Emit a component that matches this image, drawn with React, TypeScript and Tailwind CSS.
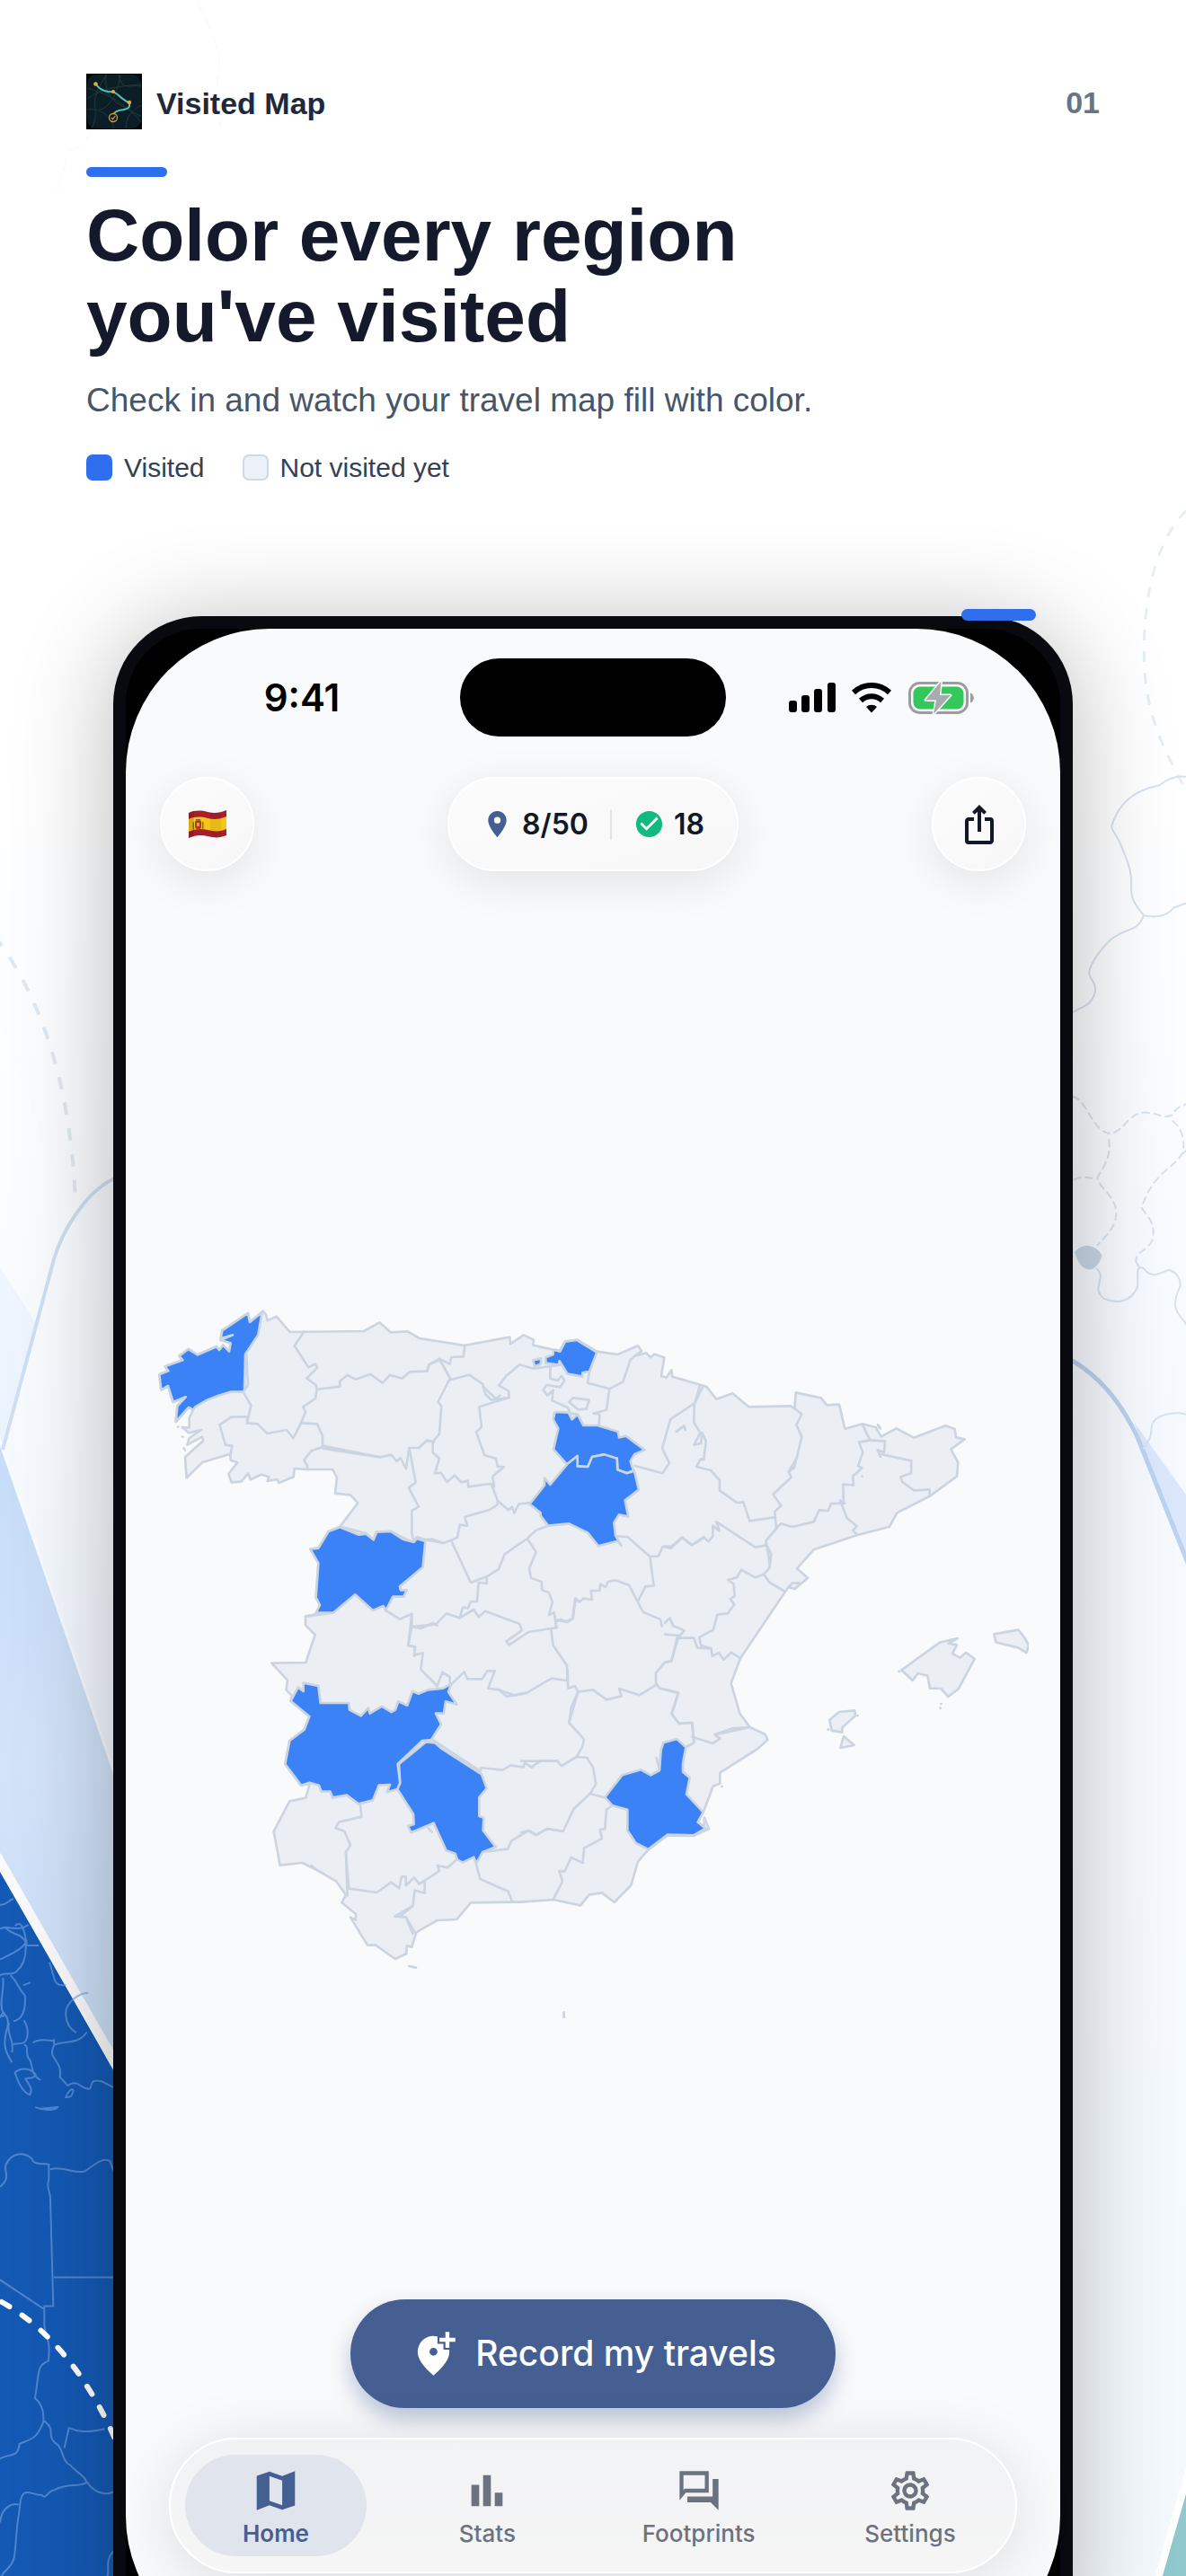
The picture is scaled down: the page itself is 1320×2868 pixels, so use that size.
import type { ReactNode } from 'react';
import { MdAddLocationAlt, MdCheckCircle, MdIosShare, MdLocationOn, MdOutlineSettings } from 'react-icons/md';

interface BorderGroup {
  x: number;
  y: number;
  lines: string[];
}

// Mainland silhouette, clockwise from A Coruña
const mainland =
  '398,58 408,70 413,90 443,76 488,128 735,125 787,96 824,129 882,126 920,149 1070,173 1222,145 1224,168 1268,138 1302,154 1300,172 1365,187 1390,190 1406,160 1447,154 1513,193 1582,203 1650,174 1662,192 1640,208 1678,198 1692,213 1705,202 1738,213 1728,275 1745,280 1762,255 1765,277 1878,310 1912,352 1966,333 2020,378 2160,375 2173,383 2177,330 2261,348 2281,372 2322,370 2341,451 2400,435 2445,447 2462,477 2513,450 2571,481 2677,441 2708,452 2712,480 2741,486 2695,520 2719,564 2715,610 2625,676 2515,732 2490,778 2381,807 2237,855 2181,918 2217,949 2174,986 2153,980 2142,995 1992,1218 1961,1301 1990,1402 2024,1448 2075,1472 2083,1490 2050,1520 1924,1600 1924,1636 1901,1645 1868,1732 1850,1765 1870,1780 1872,1750 1887,1788 1836,1811 1749,1809 1684,1858 1650,1897 1627,1976 1571,2033 1530,2001 1487,2008 1458,2043 1367,2024 1260,2032 1237,2032 1092,2034 1045,2090 980,2093 910,2133 895,2182 878,2178 877,2205 839,2222 774,2175 747,2176 690,2083 708,2092 708,2072 661,2034 675,2008 643,1963 578,1925 529,1901 455,1909 434,1796 487,1695 541,1684 554,1637 525,1642 472,1571 487,1493 536,1456 553,1412 491,1361 494,1342 476,1324 480,1291 427,1234 541,1232 572,1139 540,1107 540,1078 575,1070 588,1040 575,1015 583,900 556,853 583,850 617,794 655,778 715,699 690,673 639,667 645,615 631,587 546,587 503,584 500,612 451,632 445,620 413,626 418,612 393,604 356,621 349,600 326,627 293,630 283,602 313,564 290,556 289,535 196,563 143,615 138,546 198,492 195,478 145,505 152,482 192,455 150,465 128,446 152,448 152,415 165,388 150,380 107,428 112,375 140,345 98,362 81,308 58,322 52,270 82,258 71,243 130,222 118,208 149,185 180,204 243,177 252,188 265,172 285,193 290,165 257,155 297,138 257,150 262,123 348,65 354,95';

const borders: BorderGroup[] = [
  {
    x: 0,
    y: 0,
    lines: [
      '535,127 503,174 550,246 572,235 580,247 544,283 575,305 578,320',
      '578,320 655,310 655,292 680,272 707,286 757,269 797,298 822,272 863,283 888,261 947,259 953,237 990,220',
      '578,320 573,350 532,378 540,395 525,432 499,483 477,455 412,467 380,435 345,432 358,373 332,328',
      '343,205 348,305 332,328',
      '345,411 292,412 253,438 273,505 295,508 290,535',
      '345,432 345,411',
      '525,432 579,435 597,475 597,512 560,525 535,555 546,575 546,587',
      '597,508 790,546 826,538 845,560 857,548 876,585 886,515 918,515 945,490 965,495',
      '597,516 700,533 790,546',
      '886,515 908,630 885,648 918,712 895,725 895,800 902,828',
      '655,778 742,800 767,822 776,796 826,794 880,822 902,830 912,812 940,822 965,820 997,832',
      '808,1058 855,1087 893,1070 895,1110 883,1175 905,1180 903,1210',
    ],
  },
  {
    x: 870,
    y: 0,
    lines: [
      '202,173 198,210 157,212 152,235 117,218 82,237 75,259',
      '117,218 155,287',
      '130,240 155,287 217,271 262,302 270,335 290,355 350,347 348,325 316,307 340,275 385,237 432,250 520,238',
      '262,310 305,350 320,340',
      '350,347 250,378 258,445 240,463 268,540 305,550 312,578 333,578 295,610 300,645',
      '150,288 112,362 124,375 117,468 95,495 95,530 117,550 102,600 122,598 143,629 168,607 190,630 212,625 214,645 285,635 300,640',
      '100,495 75,490 48,515',
      '290,635 312,692 310,705 285,722 202,745 210,775 185,772 177,815 130,833 75,822',
      '312,692 348,723 360,712 367,733 382,703 420,698',
      '158,828 222,965 275,945 315,920 335,870 410,818 440,790 480,775',
      '275,950 275,968 248,965 243,1028 222,1028 213,1050 195,1048 185,1083',
      '25,1070 25,1112 105,1105 140,1068 185,1083 232,1055 248,1080 270,1060 385,1103 392,1125 340,1162 350,1173 415,1130 510,1115',
      '410,818 440,862 417,918 423,950 458,962 460,990 482,998 495,1030 483,1073 500,1065 508,1115',
      '510,1090 545,1097 563,1085 572,1018 585,1030 597,1018 627,1022 623,992 652,992 655,970 672,980 680,962 703,957 750,973 797,1063 855,1088 860,1110',
      '710,810 745,812 820,878 833,975 805,978 780,1027',
      '820,878 848,877 863,845 890,850 927,815 960,840 990,822',
      '770,575 862,600 885,565 861,517 888,420 970,365 987,305',
      '487,245 487,283 512,290 525,275 535,290 520,312 475,305 463,322 478,340 497,322 493,357 545,380 555,400 578,403 598,438',
      '632,400 652,403 650,438',
      '563,348 617,355 608,385 580,387 550,362 563,348',
      '770,208 755,220 730,295 685,318 675,388 632,400',
      '643,193 618,260 612,298 685,318',
      '908,460 935,442 938,455',
    ],
  },
  {
    x: 1740,
    y: 180,
    lines: [
      '125,133 98,190 97,250 118,285 97,325 120,320 125,285 137,312 130,375 120,372 105,398 153,410 183,443 183,477 240,518 262,516 283,579 365,567',
      '433,203 457,222 439,258 457,298 440,370 413,415 422,433 361,490 388,528 367,548 372,605',
      '439,370 432,400 413,415',
      '372,605 337,645 340,660 302,667 172,582 182,612 160,595 160,630 145,648 130,633 90,659 57,634 20,665 0,663',
      '372,603 388,588 425,599 497,582 515,543 545,545 555,521 600,520',
      '660,258 685,309 735,313 732,350 710,342 720,365',
      '685,309 648,316 661,350 645,395 658,402 627,430 630,460 595,457 597,520 585,510 608,570 641,597 628,610 641,625',
      '722,356 823,378 822,420 787,432 792,448 832,477 884,474 884,496',
      '340,660 355,690 350,735 330,757 350,785 402,815',
      '337,648 347,700 350,735',
      '330,757 302,768 255,742 240,768 210,776 230,790 233,830 218,840 232,858 210,888 175,892 162,942 115,968 120,995 155,1005 158,1030 180,1020 196,1042 222,1018 252,1038',
      '0,920 16,903 28,930 65,945 50,962 0,958',
      '45,968 22,1045 0,1052',
      '45,970 97,970 108,1003 155,1005',
      '413,800 425,787 450,787',
      '40,280 62,262 68,270',
      '711,258 720,270',
      '658,429 659,430',
      '0,1142 45,1153 22,1223 47,1256 92,1253 97,1320 75,1332',
      '90,1300 160,1322 185,1306 167,1293 225,1272 284,1268',
      '167,1293 284,1268',
      '782,1081 783,1082',
      '922,1190 923,1190',
      '919,1204 920,1204',
      '545,1276 546,1276',
      '643,1229 644,1229',
    ],
  },
  {
    x: 390,
    y: 1020,
    lines: [
      '505,50 493,155 517,160 513,187 542,180 535,235 590,290',
      '150,58 242,46',
      '505,92 535,98 575,80 590,88',
      '590,290 607,245 632,260 632,290 680,243 690,267 740,267 757,240 782,240 760,298 795,303 822,325 890,313 940,283 972,265 1022,272',
      '795,303 850,322 890,313',
      '333,688 337,727 262,745 250,765 280,775 300,822 285,845 290,990',
      '285,850 295,967 388,980 436,946 463,966 470,928 485,926 485,957 513,930 530,952 597,908 590,890 625,897 655,870',
      '548,940 548,982 515,973 508,1025 448,1060 485,1062 515,1113',
      '508,1025 465,1060 485,1062 508,1118',
      '720,885 733,935 827,976 840,1010',
      '742,845 825,835 838,807 895,773 920,788 958,767 1010,776',
      '575,470 735,575 735,563 808,571 835,555 878,562 882,547 905,562 935,540 990,541',
      '560,765 572,778',
      '170,890 185,903',
      '495,1226 519,1231',
    ],
  },
  {
    x: 1260,
    y: 1020,
    lines: [
      '100,100 107,155 153,222 155,275',
      '155,235 157,298 180,290 190,310 160,413 210,468 205,492 185,527 220,530 240,562 250,618 230,650',
      '190,310 168,360 160,413',
      '190,310 240,303 285,336 335,324 327,299 395,321 453,285',
      '520,130 503,207 478,213 450,247 450,280 462,298 525,314 503,384 528,416 570,413 577,480 555,492',
      '120,541 135,557 185,527',
      '0,541 120,541',
      '0,780 25,773 49,788 88,767 140,776 175,702 230,650 275,662',
      '107,1004 138,943 127,908 145,910 167,863 206,881 210,832 270,800 263,770 280,768 285,703 300,692',
      '115,97 117,75 133,68 150,75 172,65 180,0',
      '452,530 462,570',
      '143,1380 143,1398',
      '670,626 671,626',
    ],
  },
  { x: 0, y: 0, lines: ['114,445 115,445', '129,477 130,478', '134,516 138,523'] },
];

const islands = [
  '2530,1257 2658,1165 2717,1151 2687,1168 2715,1173 2700,1202 2725,1216 2746,1199 2774,1220 2720,1320 2686,1346 2662,1319 2625,1318 2617,1276 2585,1268 2567,1292',
  '2839,1137 2920,1123 2943,1152 2955,1176 2947,1199 2920,1183 2845,1164',
  '2290,1423 2322,1397 2374,1392 2376,1410 2333,1448 2332,1465 2297,1459',
  '2337,1478 2372,1508 2326,1517',
];

const visitedRegions = [
  // A Coruña
  '395,62 382,138 339,203 336,323 330,328 290,328 250,340 208,357 172,378 165,388 150,380 107,428 112,375 140,345 98,362 81,308 58,322 52,270 82,258 71,243 130,222 118,208 149,185 180,204 243,177 252,188 265,172 285,193 290,165 257,155 297,138 257,150 262,123 348,65 354,95',
  // Salamanca
  '617,794 655,780 718,805 742,802 767,822 778,796 825,794 865,820 902,830 912,818 940,827 932,913 855,978 858,990 878,990 868,1012 832,1012 808,1058 800,1043 765,1058 706,1005 632,1066 575,1066 588,1040 575,1015 583,900 556,853 583,850',
  // Bizkaia
  '1367,187 1390,193 1407,160 1447,155 1513,196 1488,260 1465,264 1465,277 1415,268 1388,225 1385,238 1342,232 1342,213 1367,203',
  '1300,222 1327,216 1325,235 1305,243',
  // La Rioja
  '1373,395 1418,397 1430,420 1448,403 1468,440 1515,440 1583,460 1587,480 1610,475 1673,522 1638,537 1625,560 1635,590 1613,600 1582,588 1580,550 1550,550 1537,537 1497,545 1483,578 1448,575 1448,542 1413,570 1368,520 1384,450 1367,420',
  // Soria
  '1448,542 1448,577 1483,578 1497,545 1537,537 1580,550 1582,588 1613,600 1638,592 1653,655 1607,690 1618,745 1587,738 1570,765 1575,808 1595,842 1582,826 1518,843 1482,798 1420,768 1350,775 1325,742 1325,732 1288,703 1338,640 1338,615 1357,638 1413,570',
  // Badajoz
  '533,1300 583,1310 590,1367 685,1367 687,1390 725,1410 750,1383 755,1402 795,1378 827,1397 840,1390 850,1362 880,1375 897,1328 917,1336 950,1323 1000,1318 1027,1303 1017,1330 1045,1372 1008,1362 1002,1402 975,1402 993,1438 960,1490 930,1493 848,1571 856,1635 847,1655 812,1665 822,1640 785,1642 765,1692 717,1704 678,1675 630,1683 623,1663 593,1663 585,1642 554,1633 525,1642 472,1571 487,1493 536,1456 553,1412 491,1361 515,1315 533,1328',
  // Córdoba
  '943,1497 972,1500 995,1520 1128,1605 1145,1652 1120,1682 1120,1745 1135,1750 1133,1793 1175,1848 1132,1865 1110,1903 1102,1882 1065,1900 1047,1890 1040,1870 1010,1860 968,1768 893,1800 882,1778 902,1772 900,1738 847,1655 856,1635 852,1571',
  // Murcia
  '1780,1487 1810,1515 1800,1570 1800,1597 1823,1617 1812,1672 1868,1732 1850,1765 1876,1786 1836,1809 1749,1807 1684,1856 1643,1835 1615,1793 1615,1723 1565,1710 1540,1682 1597,1608 1660,1590 1693,1608 1722,1592 1727,1523 1735,1500',
];

const navItems = [
  { label: 'Home', icon: <MapIcon />, active: true },
  { label: 'Stats', icon: <StatsIcon />, active: false },
  { label: 'Footprints', icon: <ForumIcon />, active: false },
  { label: 'Settings', icon: <MdOutlineSettings size={52} />, active: false },
];

function MapIcon() {
  return (
    <svg viewBox="1 1 22 22" className="size-[52px]" fill="currentColor" fillRule="evenodd" aria-hidden="true">
      <path d="M15 5.1 9 3 3 5.02v16.2l6-2.33 6 2.1 6-2.02V2.77zm0 13.79-6-2.11V5.11l6 2.11z" />
    </svg>
  );
}

function StatsIcon() {
  return (
    <svg viewBox="0 0 24 24" className="size-[52px]" fill="currentColor" aria-hidden="true">
      <path d="M4 9h4v11H4zM16 13h4v7h-4zM10 4h4v16h-4z" />
    </svg>
  );
}

function ForumIcon() {
  return (
    <svg viewBox="0 0 24 24" className="size-[52px]" fill="currentColor" fillRule="evenodd" aria-hidden="true">
      <path d="M2 2h15v11H5.2L2 17zM4 4v7.6l.6-.6H15V4z" />
      <path d="M19 6h3v16l-4-4H6v-3h13z" />
    </svg>
  );
}

function AppLogo() {
  return (
    <svg viewBox="0 0 62 62" className="size-[62px]" aria-hidden="true">
      <rect width="62" height="62" fill="#020607" />
      <rect x="1" y="1" width="60" height="60" rx="10" fill="#0b1e25" />
      <g fill="none" stroke="#22383f" strokeWidth="1">
        <path d="M6 61c8-14 2-24 4-34S18 10 22 1M1 16c20 6 40 14 60 38M1 40c16-2 26 8 30 21M22 1c-2 16 4 28 16 34s16 10 23 12M61 14C48 12 40 20 36 1M1 28c14-10 30-14 60-16M44 61c0-12 6-20 17-26M14 40c8 0 20-12 24-38" />
      </g>
      <path
        d="M11 12c3 5 8 7 13 8 5 0 8 0 13 5s9 6 11 8c1 4-1 6-6 7-9 1-12 3-12 7"
        fill="none"
        stroke="#4fc6bd"
        strokeWidth="2"
      />
      <g fill="#f5a534">
        <circle cx="10.500" cy="11.500" r="2.300" />
        <circle cx="30" cy="20" r="2" />
        <circle cx="48" cy="32" r="2.200" />
      </g>
      <circle cx="30" cy="49" r="4.500" fill="#0b1e25" stroke="#d8973a" strokeWidth="1.300" />
      <path d="m28 49 1.500 1.700L32.300 47" fill="none" stroke="#d8973a" strokeWidth="1.200" />
    </svg>
  );
}

function SpainFlag() {
  return (
    <svg viewBox="0 0 42 31" className="h-[31px] w-[42px]" aria-hidden="true">
      <path d="M0 3C7 0 13 0 21 2s14 1 21-2v28c-7 3-13 3-21 1s-14-1-21 2z" fill="#a81f2b" />
      <path d="M0 10c7-3 13-3 21-1s14 1 21-2v14c-7 3-13 3-21 1s-14-1-21 2z" fill="#f5c518" />
      <path d="M7 13c2-3 6-3 7 0v6c-1 3-6 3-7 0z" fill="#b23a2c" />
      <path d="M4.500 13.500h1.500v8H4.500zM15 13h1.500v8H15zM8 10h5v2H8z" fill="#8b6a3a" />
      <path d="M9 14h3v4H9z" fill="#d9a13a" />
      <path d="M0 3v28c2-1 4-2 6-2V1C4 1 2 2 0 3z" fill="#000" opacity=".12" />
      <path d="M24 2.500v27c5 1 8 0 12-1v-27c-4 1-7 2-12 1z" fill="#000" opacity=".06" />
    </svg>
  );
}

function StatusIcons() {
  return (
    <svg viewBox="0 0 206 36" className="h-[36px] w-[206px]" aria-label="Signal, Wi-Fi and battery">
      <rect x="0" y="21" width="9" height="13" rx="3" />
      <rect x="14" y="15" width="9" height="19" rx="3" />
      <rect x="28" y="8" width="9" height="26" rx="3" />
      <rect x="43" y="1" width="9" height="33" rx="3" />
      <g fill="none" stroke="#000" strokeWidth="6">
        <path d="M72 12a29 29 0 0 1 40 0" />
        <path d="M80 21a17.500 17.500 0 0 1 24 0" />
      </g>
      <path d="M92 34.500 86 28a9 9 0 0 1 12 0z" />
      <rect x="134.500" y="1.500" width="64" height="33" rx="11" fill="none" stroke="#9b9da0" strokeWidth="3" />
      <rect x="138.500" y="5.500" width="56" height="25" rx="7.500" fill="#34c759" />
      <path d="M202 12.500c5 1.500 5 9.500 0 11z" fill="#9b9da0" />
      <path
        d="M169.500-.5 152 20.500h12l-3 15.500 19-21h-12z"
        fill="#a9acaf"
        stroke="#f9fafc"
        strokeWidth="3"
        strokeLinejoin="round"
        paintOrder="stroke"
      />
    </svg>
  );
}

function SpainMap() {
  return (
    <svg viewBox="45 50 2910 2370" className="h-auto w-full" role="img" aria-label="Map of visited regions in Spain">
      <g fill="#ebeff4" stroke="#cbd5e1" strokeWidth="8" strokeLinejoin="round">
        <polygon points={mainland} />
        {islands.map((points) => (
          <polygon key={points} points={points} />
        ))}
      </g>
      <g fill="none" stroke="#cbd5e1" strokeWidth="8" strokeLinejoin="round" strokeLinecap="round">
        {borders.map((group, i) => (
          <g key={i} transform={`translate(${group.x} ${group.y})`}>
            {group.lines.map((points) => (
              <polyline key={points} points={points} />
            ))}
          </g>
        ))}
      </g>
      <g fill="#3b82f6" stroke="#cbd5e1" strokeWidth="8" strokeLinejoin="round">
        {visitedRegions.map((points) => (
          <polygon key={points} points={points} />
        ))}
      </g>
    </svg>
  );
}

function Backdrop() {
  return (
    <svg
      viewBox="0 0 1320 2868"
      preserveAspectRatio="none"
      className="absolute inset-0 h-full w-full"
      fill="none"
      aria-hidden="true"
    >
      <defs>
        <linearGradient id="page" x1="0" y1="0" x2="0" y2="1">
          <stop offset="0.3" stopColor="#ffffff" />
          <stop offset="0.55" stopColor="#f6faff" />
          <stop offset="1" stopColor="#f4f9fd" />
        </linearGradient>
        <linearGradient id="facet" x1="0" y1="0" x2="0" y2="1">
          <stop offset="0" stopColor="#f0f6fe" />
          <stop offset="1" stopColor="#eaf3fe" />
        </linearGradient>
        <linearGradient id="haze" x1="0" y1="0" x2="0" y2="1">
          <stop offset="0" stopColor="#fdfeff" />
          <stop offset="1" stopColor="#f1f7fe" />
        </linearGradient>
        <linearGradient id="sky" x1="0" y1="0" x2="0" y2="1">
          <stop offset="0" stopColor="#c6dcf8" />
          <stop offset="0.5" stopColor="#d3e3fa" />
          <stop offset="1" stopColor="#c8def5" />
        </linearGradient>
      </defs>
      <rect width="1320" height="2868" fill="url(#page)" />

      {/* Left side */}
      <path d="M0 1140 130 1490V2000L0 1615z" fill="url(#haze)" />
      <path d="M0 1410 41 1475 3 1610 0 1600z" fill="url(#facet)" />
      <path d="M2 1616 130 1985V2320L0 2080V1610z" fill="url(#sky)" />
      <path d="M3 1612 130 1982" stroke="#f8fbff" strokeWidth="3" />
      <path d="M-6 1042Q76 1150 84 1337" stroke="#dfe9f1" strokeWidth="4" strokeDasharray="14 15" />
      <path d="M130 1311C108 1320 94 1338 83 1354 72 1370 65 1385 60 1402L3 1614" stroke="#cfdff3" strokeWidth="4" />
      <path d="M0 2078 130 2312V2868H0z" fill="#1459b4" />
      <path d="M-4 2066 130 2300" stroke="#fafafa" strokeWidth="11" />
      <g transform="translate(0 2000) scale(.3333 .5537)" stroke="#6f9ede" strokeWidth="2" opacity=".65">
        <path vectorEffect="non-scaling-stroke" d="M0 218c20 2 25-8 45-12M0 266c30-8 60 8 95-8M0 328c30-10 80-20 90-40M15 262c30 20 50 10 70 30 5 30-10 50-30 60-20 10-40 0-55 8M50 260c20-10 30 0 40 40h40M10 365c5 30-15 50 0 70 20 10 20 20 10 40-10 30 0 40 20 60M35 360c20 10 30 30 48 40 5 30-10 50-38 52M0 440c20 10 20-20 0 5M78 380l24-6M80 450c20 20 12 40 0 45-25 5-30 0-40 5" />
        <path vectorEffect="non-scaling-stroke" d="M30 455c-10 30 20 30 10 60M80 500c20 0 0 20 20 30 10 10 0 30 36 40M50 555c20-10 50-10 70 5-10 10-30 5-35 8 15 15 25 20 15 32-25-5-40-25-50-45zM118 625c20 6 50 0 74 0-10 8-50 6-74 0zM110 495c30-12 60 0 70-5 5 20-10 10-5 30 20 20 30 25 25 45 20 10 25 20 30 15 30-12 40 10 70 8 10-10 0-20 40-15l38 12M180 500c40-10 80 0 110-26M165 334c20 30 10 50 55 45M295 395c-30 0-80 20-75 45 2 20 20 30 35 35M220 605c5-10 20-20 25-14-5 14-10 14-25 14z" />
        <path vectorEffect="non-scaling-stroke" d="M0 785c40-20 10-30 20-45 20-25 60-25 85-12 10 15 30 8 58 12v30c-10 20 5 20 5 40l10 215h-30v40c10 30 20 30 14 70-40 10-30 20-45 75 20 10 30 25 28 45 50 20 0 30 50 50 20 15 10 30 40 40 20 15 50 20 55 35-40 10-60 0-110 15-20 0-25 20-40 10-40 0-70-25-75 30-15 50-10 80-20 100-15 25-35 15-45 45M168 750c40-8 80 10 115 4 30-12 60-30 85-20l10 18M180 967h200M0 972l145 58M0 1332c30-12 60 0 65-30 40-10 60-10 82-48M290 1378c20 20 60 30 90 20M215 1310l15-40c30 8 60 10 120 2M0 1460c5-30 40-40 62-36M378 1518c-30 20-10 40-20 50" />
      </g>
      <path
        d="M2 2563C50 2590 96 2640 130 2720"
        stroke="#fff"
        strokeWidth="6"
        strokeLinecap="round"
        strokeDasharray="10 17"
      />

      {/* Right side */}
      <path d="M1262 1583 1320 1664V1736z" fill="#dbe8fb" />
      <path d="M1190 1513C1225 1532 1248 1562 1266 1600L1322 1740" stroke="#bcd2f0" strokeWidth="5" />
      <g transform="translate(1170 500) scale(.3333 .7015)" stroke="#d6e2ee">
        <path vectorEffect="non-scaling-stroke" strokeWidth="3" strokeDasharray="12 12" d="M452 97C360 140 310 220 310 320s60 150 140 222" stroke="#e6eef5" />
        <path vectorEffect="non-scaling-stroke" strokeWidth="2" d="M450 520c-30-2-60 2-90 14-60 5-130 20-158 64 0 10 20 15 35 35 15 20 30 32 30 50 0 25-5 30 42 57-20 25-50 20-90 32-40 10-90 45-92 58s25 15 20 30c-10 25-50 25-74 34M309 740c50 5 80 0 100-12l45-8" />
        <path vectorEffect="non-scaling-stroke" strokeWidth="2" strokeDasharray="9 4" d="M70 1027c50 5 60 50 120 59 60 0 60-35 130-33 40 2 60 10 84 4 10-12 30-14 50-18M192 1095c10 30-15 40-38 62 15 20 40 20 60 45 15 30-30 45-60 62M75 1160c25-8 50-3 78-2M404 1066c30 10 40 25 38 48-30 30-100 30-140 90 20 15 50 25 35 52-20 20-55 15-54 34M440 1118l12-6" />
        <path vectorEffect="non-scaling-stroke" strokeWidth="2" d="M150 1300c40 15-20 30 25 48 40 8 90 8 113-18 5-20-10-35 20-30 30 20 60 5 85 3 20 2 40 12 38 25-40 40 0 45 22 62M283 1290c5 5 10 8 15 10M450 1532c-40-5-110 0-115 20 0 20-15 25-30 35" />
        <path d="M78 1275c20-15 70-15 92 5-20 30-70 30-92-5z" fill="#c9d8e7" stroke="none" />
      </g>
      <path d="M1320 2768 1293 2868h27z" fill="#8fc9cd" />
      <path d="M1324 2748 1288 2874" stroke="#fff" strokeWidth="8" />
      <g stroke="#f9fafb" strokeWidth="2" strokeDasharray="14 8">
        <path d="M220 0c10 30 30 50 22 90 5 40 10 20 0 60M100 145c-5 30-20 12-26 30-5 30-14 40-12 40" />
      </g>
    </svg>
  );
}

function LegendItem({ swatch, children }: { swatch: string; children: ReactNode }) {
  return (
    <li className="flex items-center gap-[13px]">
      <span className={`size-[29px] rounded-[7px] ${swatch}`} />
      <span className="pt-[2px]">{children}</span>
    </li>
  );
}

const glass =
  'border-2 border-white bg-linear-to-br from-[#fcfcfc] to-[#f7f7f7] shadow-[0_12px_50px_rgba(0,0,0,0.09)]';

function PhoneScreen() {
  return (
    <div className="flex aspect-[1206/2622] flex-col rounded-[160px] bg-[#f9fafc] pt-[33px] font-['Inter',sans-serif]">
      {/* Status bar */}
      <div className="grid h-[87px] grid-cols-[1fr_296px_1fr] items-center">
        <div className="pl-5 text-center text-[42px] font-semibold text-black">9:41</div>
        <div className="h-full rounded-full bg-black" />
        <div className="flex justify-center pr-[26px]">
          <StatusIcons />
        </div>
      </div>

      {/* Toolbar */}
      <div className="mt-[45px] flex items-center justify-between px-[38px]">
        <button type="button" aria-label="Country: Spain" className={`flex size-[105px] items-center justify-center rounded-full ${glass}`}>
          <SpainFlag />
        </button>
        <div className={`flex h-[105px] w-[324px] items-center justify-center rounded-full text-[32px] font-semibold text-[#111827] ${glass}`}>
          <MdLocationOn size={35} className="mr-[10px] text-[#455f93]" />
          <span>8/50</span>
          <span className="mx-6 h-[34px] w-[2px] bg-[#e3e5e8]" />
          <MdCheckCircle size={35} className="mr-[10px] text-[#12b981]" />
          <span>18</span>
        </div>
        <button type="button" aria-label="Share" className={`flex size-[105px] items-center justify-center rounded-full text-[#111827] ${glass}`}>
          <MdIosShare size={48} />
        </button>
      </div>

      <div className="mt-[487px] px-[35px]">
        <SpainMap />
      </div>

      <button
        type="button"
        className="mx-auto mt-[313px] flex h-[121px] w-[540px] shrink-0 items-center justify-center gap-5 rounded-full bg-[#455f93] text-[39px] font-medium text-white shadow-[0_12px_24px_rgba(69,95,147,0.35)]"
      >
        <MdAddLocationAlt size={53} />
        Record my travels
      </button>

      <nav className="mx-12 mt-[33px] flex h-[151px] shrink-0 items-center justify-between rounded-full border-2 border-white bg-linear-to-b from-[#f1f2f4] to-[#f6f6f6] px-4 shadow-[0_10px_70px_rgba(0,0,0,0.12)]">
        {navItems.map((item) => (
          <a
            key={item.label}
            href="#"
            className={`flex h-[113px] w-[202px] flex-col items-center gap-[6px] rounded-full pt-[14px] text-[26px] leading-8 ${
              item.active ? 'bg-[#e0e4ec] font-semibold text-[#455f93]' : 'font-medium text-[#6b7280]'
            }`}
          >
            {item.icon}
            {item.label}
          </a>
        ))}
      </nav>
    </div>
  );
}

export default function App() {
  return (
    <main className="relative h-screen overflow-hidden bg-white font-['Liberation_Sans',Arial,sans-serif]">
      <Backdrop />

      <div className="relative">
        <header className="px-24 pt-[82px]">
          <div className="flex items-center justify-between text-[34px] leading-[40px] font-bold">
            <div className="flex items-center gap-4 text-[#1e293b]">
              <AppLogo />
              <span className="pt-1">Visited Map</span>
            </div>
            <span className="pt-[2px] text-[#64748b]">01</span>
          </div>
          <div className="mt-[42px] h-[11px] w-[90px] rounded-full bg-[#2f6fed]" />
          <h1 className="mt-5 text-[82px] leading-[90px] font-bold text-[#141a2b]">
            Color every region
            <br />
            you&apos;ve visited
          </h1>
          <p className="mt-[25px] text-[37px] leading-[48px] text-[#475569]">
            Check in and watch your travel map fill with color.
          </p>
          <ul className="mt-[33px] flex gap-[42px] text-[30px] leading-8 text-[#334155]">
            <LegendItem swatch="bg-[#2f6fed]">Visited</LegendItem>
            <LegendItem swatch="border-2 border-[#cbd9e8] bg-[#ebf1f6]">Not visited yet</LegendItem>
          </ul>
        </header>

        <div className="relative mx-[126px] mt-[149px] rounded-[98px] bg-[#090a0f] p-[14px] shadow-[0_10px_110px_rgba(0,0,0,0.28)]">
          <div className="rounded-[84px] bg-black">
            <PhoneScreen />
          </div>
          <div className="absolute -top-2 right-[41px] h-[13px] w-[83px] rounded-full bg-[#2f6fed]" />
        </div>
      </div>
    </main>
  );
}
